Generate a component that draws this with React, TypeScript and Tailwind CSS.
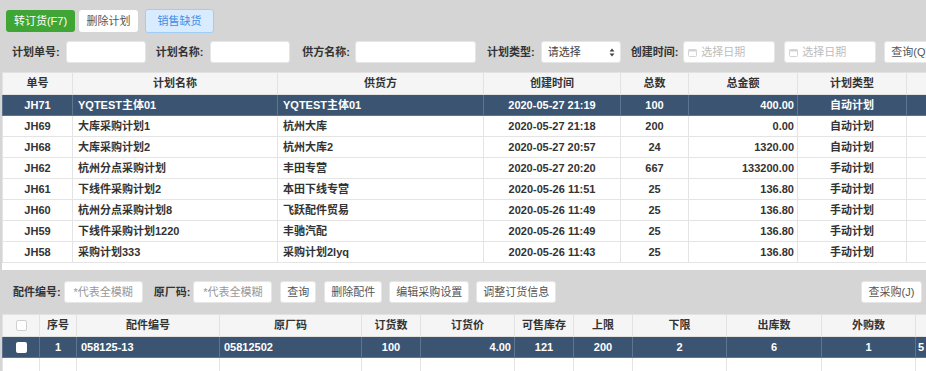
import React from 'react';

const font = { fontFamily: '"Liberation Sans", "Noto Sans CJK SC", sans-serif' };

interface Plan {
    no: string;
    name: string;
    supplier: string;
    time: string;
    count: string;
    amount: string;
    type: string;
}

const plans: Plan[] = [
    { no: 'JH71', name: 'YQTEST主体01', supplier: 'YQTEST主体01', time: '2020-05-27 21:19', count: '100', amount: '400.00', type: '自动计划' },
    { no: 'JH69', name: '大库采购计划1', supplier: '杭州大库', time: '2020-05-27 21:18', count: '200', amount: '0.00', type: '自动计划' },
    { no: 'JH68', name: '大库采购计划2', supplier: '杭州大库2', time: '2020-05-27 20:57', count: '24', amount: '1320.00', type: '自动计划' },
    { no: 'JH62', name: '杭州分点采购计划', supplier: '丰田专营', time: '2020-05-27 20:20', count: '667', amount: '133200.00', type: '手动计划' },
    { no: 'JH61', name: '下线件采购计划2', supplier: '本田下线专营', time: '2020-05-26 11:51', count: '25', amount: '136.80', type: '手动计划' },
    { no: 'JH60', name: '杭州分点采购计划8', supplier: '飞跃配件贸易', time: '2020-05-26 11:49', count: '25', amount: '136.80', type: '手动计划' },
    { no: 'JH59', name: '下线件采购计划1220', supplier: '丰驰汽配', time: '2020-05-26 11:49', count: '25', amount: '136.80', type: '手动计划' },
    { no: 'JH58', name: '采购计划333', supplier: '采购计划2lyq', time: '2020-05-26 11:43', count: '25', amount: '136.80', type: '手动计划' },
];

const Label: React.FC<{ text: string; className?: string }> = ({ text, className }) => (
    <span className={`shrink-0 text-[11px] font-bold text-[#333] whitespace-nowrap ${className ?? ''}`}>{text}</span>
);

const Input: React.FC<{ w: string; placeholder?: string }> = ({ w, placeholder }) => (
    <div className={`${w} shrink-0 h-[22px] bg-white rounded-[3px] border border-[#e6e6e6] flex items-center justify-center text-[11px] text-[#999]`}>
        {placeholder}
    </div>
);

const Btn: React.FC<{ text: string; w: string }> = ({ text, w }) => (
    <div className={`${w} shrink-0 h-[22px] bg-white rounded-[3px] border border-[#e6e6e6] flex items-center justify-center text-[11px] text-[#555] whitespace-nowrap`}>
        {text}
    </div>
);

const DateInput: React.FC = () => (
    <div className="w-[92px] shrink-0 h-[22px] bg-white rounded-[3px] border border-[#e6e6e6] flex items-center gap-[4px] pl-[4px] text-[11px] text-[#bdbdbd]">
        <svg width="9" height="9" viewBox="0 0 9 9">
            <rect x="0.5" y="1.5" width="8" height="7" rx="1" fill="none" stroke="#d4d4d4" />
            <rect x="0.5" y="1.5" width="8" height="2" fill="#d4d4d4" />
        </svg>
        选择日期
    </div>
);

const App: React.FC = () => {
    return (
        <div style={font} className="w-[926px] h-[371px] overflow-hidden bg-[#d5d5d5] flex flex-col">
            {/* toolbar */}
            <div className="flex items-center gap-[3px] pl-[6px] pt-[9px]">
                <div className="w-[69px] h-[22px] rounded-[3px] bg-[#3fa535] text-white text-[11px] flex items-center justify-center">转订货(F7)</div>
                <div className="w-[59px] h-[22px] rounded-[3px] bg-white text-[#555] text-[11px] flex items-center justify-center ml-[1px]">删除计划</div>
                <div className="w-[69px] h-[24px] rounded-[3px] bg-[#d9ecff] border border-[#9fcdf5] text-[#3a8ee6] text-[11px] flex items-center justify-center ml-[4px]">销售缺货</div>
            </div>

            {/* filters */}
            <div className="flex items-center pl-[12px] mt-[8px] h-[22px] overflow-hidden">
                <Label text="计划单号:" />
                <div className="ml-[6px] shrink-0"><Input w="w-[80px]" /></div>
                <Label text="计划名称:" className="ml-[10px]" />
                <div className="ml-[7px] shrink-0"><Input w="w-[80px]" /></div>
                <Label text="供方名称:" className="ml-[12px]" />
                <div className="ml-[5px] shrink-0"><Input w="w-[121px]" /></div>
                <Label text="计划类型:" className="ml-[11px]" />
                <div className="ml-[6px] shrink-0 w-[80px] h-[22px] bg-white rounded-[3px] border border-[#e6e6e6] flex items-center justify-between pl-[6px] pr-[5px] text-[11px] text-[#444]">
                    请选择
                    <svg width="6" height="9" viewBox="0 0 6 9">
                        <path d="M3 0.5 L5.5 3.5 H0.5 Z" fill="#444" />
                        <path d="M3 8.5 L5.5 5.5 H0.5 Z" fill="#444" />
                    </svg>
                </div>
                <Label text="创建时间:" className="ml-[10px]" />
                <div className="ml-[5px] shrink-0"><DateInput /></div>
                <div className="ml-[9px] shrink-0"><DateInput /></div>
                <div className="ml-[8px] shrink-0 w-[60px] h-[22px] bg-white rounded-[3px] border border-[#e6e6e6] flex items-center pl-[6px] text-[11px] text-[#555] whitespace-nowrap">查询(Q)</div>
            </div>

            {/* plan table */}
            <div className="mt-[9px] ml-[2px] bg-white h-[198px] overflow-hidden shrink-0">
                <table className="table-fixed border-collapse text-[11px] text-[#333]" style={{ width: 960 }}>
                    <colgroup>
                        <col className="w-[70px]" />
                        <col className="w-[205px]" />
                        <col className="w-[206px]" />
                        <col className="w-[137px]" />
                        <col className="w-[68px]" />
                        <col className="w-[109px]" />
                        <col className="w-[109px]" />
                        <col className="w-[56px]" />
                    </colgroup>
                    <thead>
                        <tr className="h-[22px] bg-[#f5f5f5]">
                            {['单号', '计划名称', '供货方', '创建时间', '总数', '总金额', '计划类型', ''].map((h, i) => (
                                <th key={i} className="border border-[#e2e2e2] font-bold text-center">{h}</th>
                            ))}
                        </tr>
                    </thead>
                    <tbody>
                        {plans.map((p, i) => {
                            const sel = i === 0;
                            const td = `border ${sel ? 'border-[#5d7590]' : 'border-[#e4e4e4]'}`;
                            return (
                                <tr key={p.no} className={`h-[21px] font-semibold ${sel ? 'bg-[#3a5472] text-white' : 'bg-white'}`}>
                                    <td className={`${td} text-center`}>{p.no}</td>
                                    <td className={`${td} pl-[5px] whitespace-nowrap`}>{p.name}</td>
                                    <td className={`${td} pl-[5px] whitespace-nowrap`}>{p.supplier}</td>
                                    <td className={`${td} text-center`}>{p.time}</td>
                                    <td className={`${td} text-center`}>{p.count}</td>
                                    <td className={`${td} text-right pr-[3px]`}>{p.amount}</td>
                                    <td className={`${td} text-center`}>{p.type}</td>
                                    <td className={td}></td>
                                </tr>
                            );
                        })}
                    </tbody>
                </table>
            </div>

            {/* parts filter */}
            <div className="flex items-center pl-[13px] mt-[11px] h-[22px] shrink-0">
                <Label text="配件编号:" />
                <div className="ml-[3px] shrink-0"><Input w="w-[79px]" placeholder="*代表全模糊" /></div>
                <Label text="原厂码:" className="ml-[11px]" />
                <div className="ml-[3px] shrink-0"><Input w="w-[79px]" placeholder="*代表全模糊" /></div>
                <div className="ml-[8px] shrink-0"><Btn text="查询" w="w-[36px]" /></div>
                <div className="ml-[8px] shrink-0"><Btn text="删除配件" w="w-[58px]" /></div>
                <div className="ml-[7px] shrink-0"><Btn text="编辑采购设置" w="w-[80px]" /></div>
                <div className="ml-[7px] shrink-0"><Btn text="调整订货信息" w="w-[80px]" /></div>
                <div className="ml-auto shrink-0"><Btn text="查采购(J)" w="w-[61px]" /></div>
                <div className="ml-[4px] mr-[-10px] shrink-0"><Btn text="" w="w-[10px]" /></div>
            </div>

            {/* parts table */}
            <div className="mt-[11px] ml-[2px] bg-white flex-1 overflow-hidden">
                <table className="table-fixed border-collapse text-[11px] text-[#333]" style={{ width: 960 }}>
                    <colgroup>
                        <col className="w-[37px]" />
                        <col className="w-[37px]" />
                        <col className="w-[143px]" />
                        <col className="w-[142px]" />
                        <col className="w-[59px]" />
                        <col className="w-[94px]" />
                        <col className="w-[59px]" />
                        <col className="w-[59px]" />
                        <col className="w-[94px]" />
                        <col className="w-[95px]" />
                        <col className="w-[94px]" />
                        <col className="w-[47px]" />
                    </colgroup>
                    <thead>
                        <tr className="h-[22px] bg-[#f5f5f5]">
                            <th className="border border-[#e2e2e2]">
                                <div className="w-[11px] h-[11px] mx-auto rounded-[2px] bg-white border border-[#d0d0d0]" />
                            </th>
                            {['序号', '配件编号', '原厂码', '订货数', '订货价', '可售库存', '上限', '下限', '出库数', '外购数', ''].map((h, i) => (
                                <th key={i} className="border border-[#e2e2e2] font-bold text-center">{h}</th>
                            ))}
                        </tr>
                    </thead>
                    <tbody>
                        <tr className="h-[21px] bg-[#3a5472] text-white font-semibold">
                            <td className="border border-[#5d7590]">
                                <div className="w-[11px] h-[11px] mx-auto rounded-[2px] bg-white" />
                            </td>
                            <td className="border border-[#5d7590] text-center">1</td>
                            <td className="border border-[#5d7590] pl-[4px]">058125-13</td>
                            <td className="border border-[#5d7590] pl-[4px]">05812502</td>
                            <td className="border border-[#5d7590] text-center">100</td>
                            <td className="border border-[#5d7590] text-right pr-[3px]">4.00</td>
                            <td className="border border-[#5d7590] text-center">121</td>
                            <td className="border border-[#5d7590] text-center">200</td>
                            <td className="border border-[#5d7590] text-center">2</td>
                            <td className="border border-[#5d7590] text-center">6</td>
                            <td className="border border-[#5d7590] text-center">1</td>
                            <td className="border border-[#5d7590] pl-[2px]">5</td>
                        </tr>
                        <tr className="h-[21px] bg-white">
                            {Array.from({ length: 12 }).map((_, i) => (
                                <td key={i} className="border border-[#e4e4e4]"></td>
                            ))}
                        </tr>
                    </tbody>
                </table>
            </div>
        </div>
    );
};

export default App;
